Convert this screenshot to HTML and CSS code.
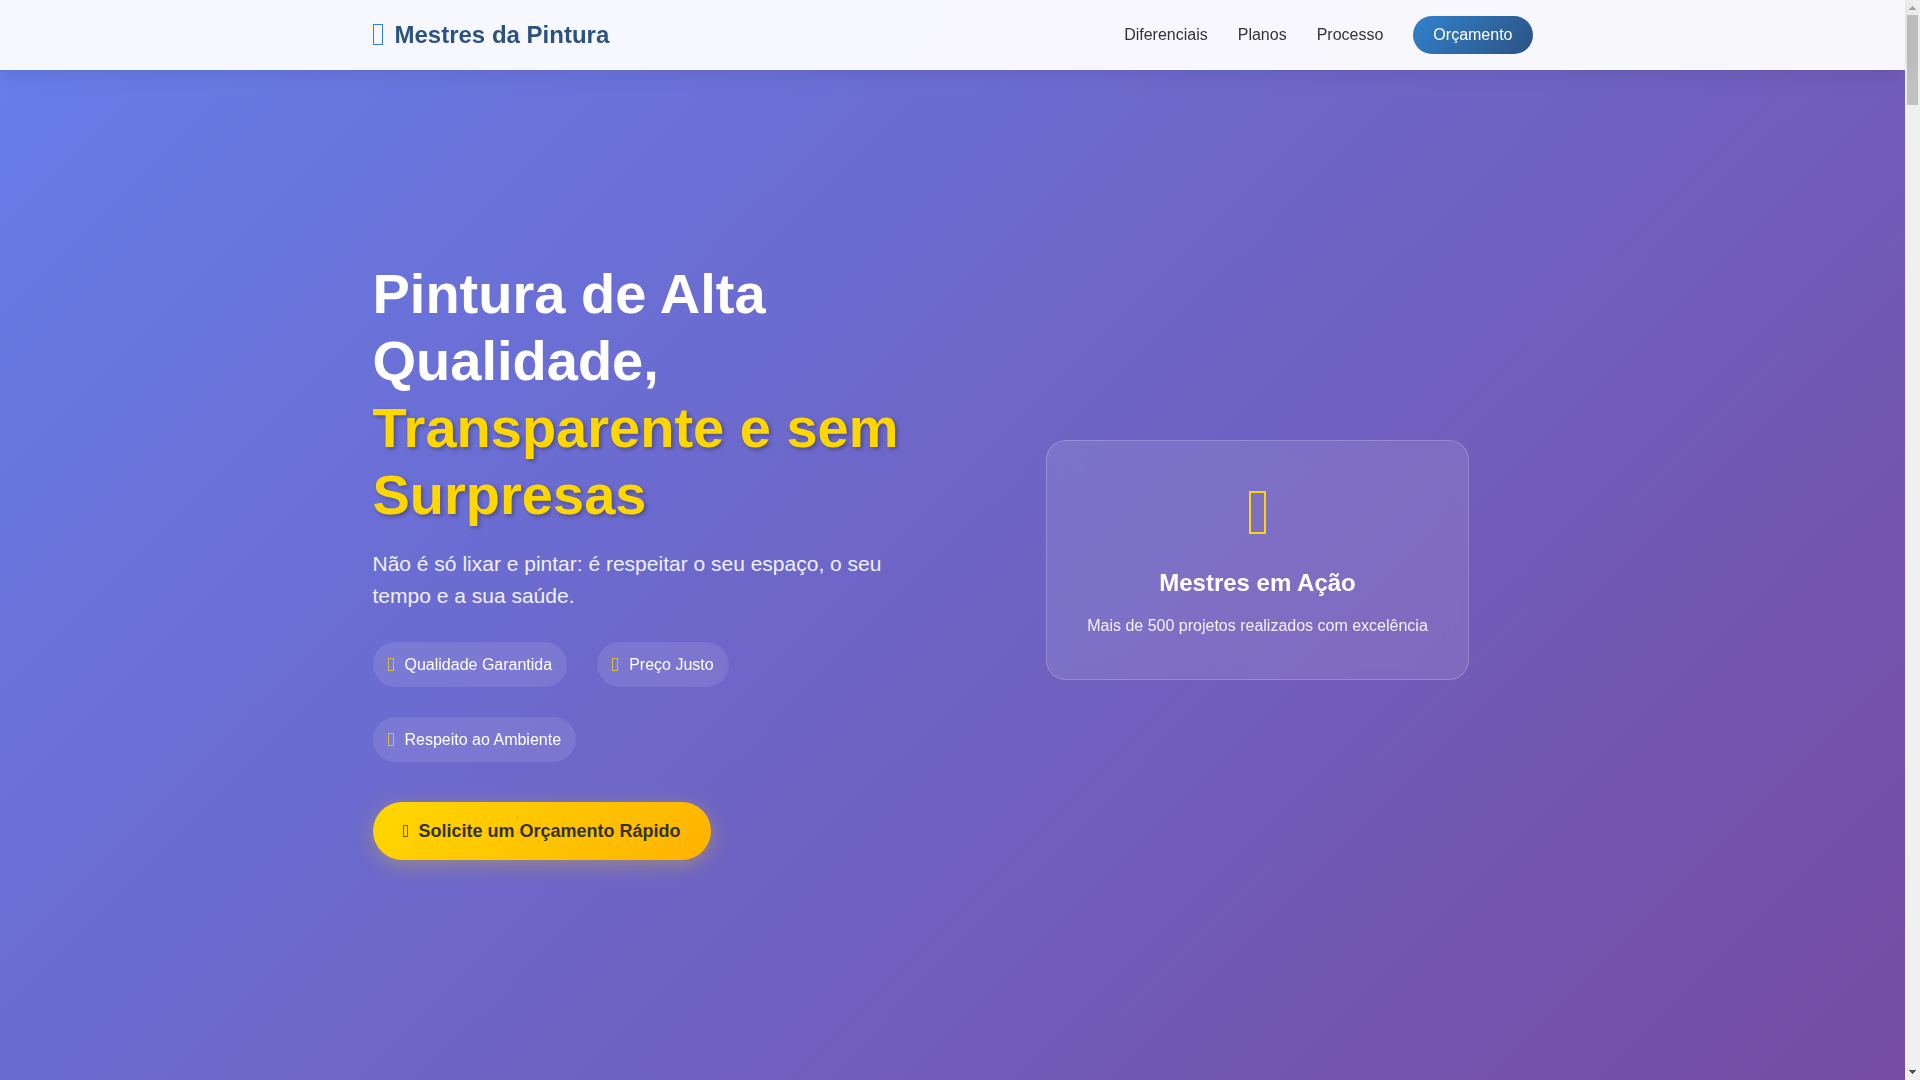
FILE: index.html
```html
<!DOCTYPE html>
<html lang="pt-BR">

<head>
    <meta charset="UTF-8">
    <meta name="viewport" content="width=device-width, initial-scale=1.0">
    <title>Mestres da Pintura</title>
    <link rel="stylesheet" href="styles.css">
</head>

<body>

    <div class="page">
        <!-- Header -->
        <header class="header">
            <nav class="container nav">
                <a href="#" class="logo"><i class="icon"></i>Mestres da Pintura</a>
                <ul class="nav-menu">
                    <li><a href="#diferenciais">Diferenciais</a></li>
                    <li><a href="#planos">Planos</a></li>
                    <li><a href="#processo">Processo</a></li>
                    <li><a href="#orcamento" class="nav-cta">Orçamento</a></li>
                </ul>
            </nav>
        </header>

        <!-- Hero -->
        <section class="hero">
            <div class="container hero-grid">
                <div class="hero-text">
                    <h1>Pintura de Alta Qualidade, <span class="highlight">Transparente e sem Surpresas</span></h1>
                    <p class="subtitle">Não é só lixar e pintar: é respeitar o seu espaço, o seu tempo e a sua saúde.</p>
                    <div class="features">
                        <div class="feature"><i class="icon"></i>Qualidade Garantida</div>
                        <div class="feature"><i class="icon"></i>Preço Justo</div>
                        <div class="feature"><i class="icon"></i>Respeito ao Ambiente</div>
                    </div>
                    <a href="#orcamento" class="cta"><i class="icon"></i>Solicite um Orçamento Rápido</a>
                </div>
                <div class="hero-visual">
                    <div class="card">
                        <i class="icon"></i>
                        <h3>Mestres em Ação</h3>
                        <p>Mais de 500 projetos realizados com excelência</p>
                    </div>
                </div>
            </div>
        </section>
    </div>

    <!-- Scrollbar -->
    <div class="scrollbar" aria-hidden="true">
        <svg class="arrow" width="15" height="15" viewBox="0 0 15 15" shape-rendering="crispEdges">
            <path fill="#a3a3a3" d="M7 6h1v1h1v1h1v1h1v1H4V9h1V8h1V7h1z" />
        </svg>
        <div class="track">
            <div class="thumb"></div>
        </div>
        <svg class="arrow" width="15" height="15" viewBox="0 0 15 15" shape-rendering="crispEdges">
            <path fill="#505050" d="M4 5h7v1h-1v1H9v1H8v1H7V8H6V7H5V6H4z" />
        </svg>
    </div>

</body>

</html>
```

FILE: styles.css
```css
* {
    margin: 0;
    padding: 0;
    box-sizing: border-box;
}

body {
    font-family: "Liberation Sans", Arial, sans-serif;
    font-size: 16px;
    line-height: 1.6;
    color: #333;
    display: grid;
    grid-template-columns: 1fr 15px;
}

a {
    color: inherit;
    text-decoration: none;
}

/* Outlined box icon, sized by its parent */
.icon {
    display: block;
    flex: none;
    border: 1px solid currentColor;
}

.container {
    width: 100%;
    max-width: 1200px;
    margin: 0 auto;
    padding: 0 20px;
}

.page {
    display: grid;
}

.header,
.hero {
    grid-area: 1 / 1;
}

/* Header */
.header {
    align-self: start;
    z-index: 10;
    background: rgba(255, 255, 255, 0.95);
    box-shadow: 0 2px 20px rgba(0, 0, 0, 0.1);
    backdrop-filter: blur(10px);
}

.nav {
    display: flex;
    justify-content: space-between;
    align-items: center;
    min-height: 70px;
}

.logo {
    display: flex;
    align-items: center;
    gap: 12px;
    font-size: 24px;
    font-weight: bold;
    color: #2c5282;
}

.logo .icon {
    width: 10px;
    height: 21px;
    color: #3182ce;
}

.nav-menu {
    display: flex;
    align-items: center;
    gap: 30px;
    list-style: none;
}

.nav-cta {
    display: block;
    padding: 8px 20px;
    line-height: 22px;
    border-radius: 25px;
    color: #fff;
    background: linear-gradient(135deg, #3182ce, #2c5282);
}

/* Hero */
.hero {
    display: flex;
    align-items: center;
    min-height: 100vh;
    padding: 120px 0 80px;
    color: #fff;
    background: linear-gradient(135deg, #667eea 0%, #764ba2 100%);
}

.hero-grid {
    display: grid;
    grid-template-columns: 1fr 1fr;
    gap: 60px;
    align-items: center;
}

.hero h1 {
    font-size: 56px;
    line-height: 1.2;
    margin-bottom: 20px;
}

.highlight {
    color: #ffd700;
    text-shadow: 2px 2px 4px rgba(0, 0, 0, 0.3);
}

.subtitle {
    font-size: 21px;
    line-height: 32px;
    margin-bottom: 30px;
    opacity: 0.9;
}

.features {
    display: flex;
    flex-wrap: wrap;
    gap: 30px;
    margin-bottom: 40px;
}

.feature {
    display: flex;
    align-items: center;
    gap: 11px;
    padding: 10px 15px;
    line-height: 25px;
    border-radius: 25px;
    background: rgba(255, 255, 255, 0.1);
    backdrop-filter: blur(10px);
}

.feature .icon {
    width: 6px;
    height: 13px;
    color: rgba(255, 215, 0, 0.7);
}

.cta {
    display: inline-flex;
    align-items: center;
    gap: 11px;
    padding: 15px 30px;
    font-size: 18px;
    line-height: 28px;
    font-weight: bold;
    color: #333;
    border-radius: 50px;
    background: linear-gradient(135deg, #ffd700, #ffb300);
    box-shadow: 0 5px 20px rgba(255, 215, 0, 0.3);
}

.cta .icon {
    width: 5px;
    height: 12px;
    color: rgba(51, 51, 51, 0.7);
}

.hero-visual {
    display: flex;
    justify-content: center;
}

.card {
    padding: 40px;
    text-align: center;
    border: 1px solid rgba(255, 255, 255, 0.2);
    border-radius: 20px;
    background: rgba(255, 255, 255, 0.1);
    backdrop-filter: blur(10px);
}

.card .icon {
    width: 17px;
    height: 43px;
    margin: 10px auto 30px;
    border-width: 2px;
    color: #ffd700;
}

.card h3 {
    font-size: 24px;
    margin-bottom: 11px;
}

.card p {
    opacity: 0.9;
}

/* Scrollbar */
.scrollbar {
    position: sticky;
    top: 0;
    height: 100vh;
    display: flex;
    flex-direction: column;
    background: #f0f0f0;
}

.track {
    flex: 1;
    padding: 0 2px;
}

.thumb {
    height: 90px;
    background: #c1c1c1;
}
```
